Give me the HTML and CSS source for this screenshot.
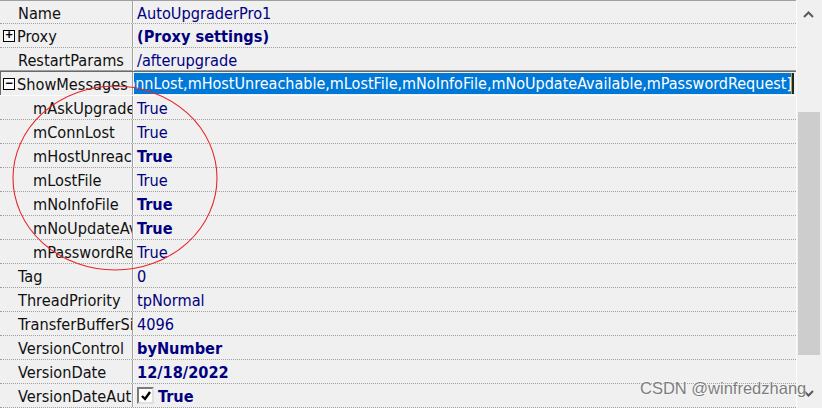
FILE: index.html
```html
<!DOCTYPE html>
<html>
<head>
<meta charset="utf-8">
<link rel="stylesheet" href="styles.css">
</head>
<body>
<div class="inspector">
  <div class="grid">
    <div class="row first"><div class="name">Name</div><div class="val">AutoUpgraderPro1</div></div>
    <div class="row"><div class="name toggle"><span class="box">+</span>Proxy</div><div class="val b">(Proxy settings)</div></div>
    <div class="row before-sel"><div class="name">RestartParams</div><div class="val">/afterupgrade</div></div>
    <div class="row sel"><div class="name toggle"><span class="box">−</span>ShowMessages</div><div class="val edit"><span class="hl">[mAskUpgrade,mConnLost,mHostUnreachable,mLostFile,mNoInfoFile,mNoUpdateAvailable,mPasswordRequest]</span><span class="caret"></span></div></div>
    <div class="row"><div class="name child">mAskUpgrade</div><div class="val">True</div></div>
    <div class="row"><div class="name child">mConnLost</div><div class="val">True</div></div>
    <div class="row"><div class="name child">mHostUnreachable</div><div class="val b">True</div></div>
    <div class="row"><div class="name child">mLostFile</div><div class="val">True</div></div>
    <div class="row"><div class="name child">mNoInfoFile</div><div class="val b">True</div></div>
    <div class="row"><div class="name child">mNoUpdateAvailable</div><div class="val b">True</div></div>
    <div class="row"><div class="name child">mPasswordRequest</div><div class="val">True</div></div>
    <div class="row"><div class="name">Tag</div><div class="val">0</div></div>
    <div class="row"><div class="name">ThreadPriority</div><div class="val">tpNormal</div></div>
    <div class="row"><div class="name">TransferBufferSize</div><div class="val">4096</div></div>
    <div class="row"><div class="name">VersionControl</div><div class="val b">byNumber</div></div>
    <div class="row"><div class="name">VersionDate</div><div class="val b">12/18/2022</div></div>
    <div class="row"><div class="name">VersionDateAutoSet</div><div class="val b"><span class="check"><svg width="12" height="12" viewBox="0 0 12 12"><path d="M2 6 L5 9 L10 2" fill="none" stroke="#000" stroke-width="2.4"/></svg></span>True</div></div>
  </div>
  <div class="scrollbar">
    <div class="arrow up"><svg width="11" height="7" viewBox="0 0 11 7"><polyline points="1,6 5.5,1.5 10,6" fill="none" stroke="#5a5a5a" stroke-width="2"/></svg></div>
    <div class="track"><div class="thumb"></div></div>
    <div class="arrow down"><svg width="11" height="7" viewBox="0 0 11 7"><polyline points="1,1 5.5,5.5 10,1" fill="none" stroke="#5a5a5a" stroke-width="2"/></svg></div>
  </div>
  <svg class="annot" width="822" height="408" viewBox="0 0 822 408"><ellipse cx="115" cy="178" rx="102" ry="92" fill="none" stroke="#e8252a" stroke-width="1.1"/></svg>
  <div class="watermark">CSDN @winfredzhang</div>
</div>
</body>
</html>
```

FILE: styles.css
```css
html, body {
  margin: 0;
  padding: 0;
  background: #f0f0f0;
}
.inspector {
  position: relative;
  width: 822px;
  height: 408px;
  display: flex;
  overflow: hidden;
  font-family: "DejaVu Sans Condensed", "DejaVu Sans", sans-serif;
  font-size: 16.2px;
}
.grid {
  width: 796px;
  display: flex;
  flex-direction: column;
}
.row {
  display: flex;
  height: 24px;
  box-sizing: border-box;
  border-bottom: 1px dotted #a0a0a0;
  flex-shrink: 0;
}
.row.first {
  border-top: 1px solid #a0a0a0;
}
.row.before-sel {
  border-bottom: 1px solid #6a6a6a;
  box-shadow: inset 0 -1px 0 #a0a0a0;
}
.row.sel {
  border-bottom: 1px solid #fcfcfc;
}
.name {
  width: 133px;
  flex-shrink: 0;
  box-sizing: border-box;
  padding-left: 18px;
  padding-top: 2px;
  border-right: 1px solid #a0a0a0;
  color: #101010;
  white-space: nowrap;
  overflow: hidden;
  display: flex;
  align-items: center;
}
.name.child {
  padding-left: 33px;
}
.name.toggle {
  padding-left: 3px;
}
.row.sel .name {
  border-left: 1px solid #6a6a6a;
  padding-left: 2px;
}
.box {
  width: 12px;
  height: 12px;
  box-sizing: border-box;
  border: 1px solid #000;
  background: #fafafa;
  font-family: "DejaVu Sans Mono", monospace;
  font-size: 12px;
  font-weight: bold;
  line-height: 9px;
  text-align: center;
  margin-right: 2px;
  margin-top: -1px;
  flex-shrink: 0;
  color: #000;
}
.val {
  flex: 1;
  min-width: 0;
  border-left: 1px solid #fbfbfb;
  padding-left: 3px;
  padding-top: 2px;
  color: #000080;
  white-space: nowrap;
  overflow: hidden;
  display: flex;
  align-items: center;
}
.val.b {
  font-weight: bold;
}
.val.edit {
  justify-content: flex-end;
  padding-left: 2px;
  padding-right: 2px;
  align-items: flex-start;
  padding-top: 1px;
}
.hl {
  background: #0078d7;
  color: #fff;
  height: 21px;
  line-height: 22px;
  font-size: 16px;
  flex-shrink: 0;
}
.caret {
  width: 2px;
  height: 21px;
  background: #1a2a2a;
  flex-shrink: 0;
  box-shadow: -1px 0 0 #c8a040;
}
.check {
  width: 17px;
  height: 17px;
  box-sizing: border-box;
  border: 2px solid;
  border-color: #7a7a7a #e0e0e0 #e0e0e0 #7a7a7a;
  background: #fff;
  display: flex;
  align-items: center;
  justify-content: center;
  margin-right: 4px;
  margin-top: -2px;
  flex-shrink: 0;
}
.scrollbar {
  width: 26px;
  box-sizing: border-box;
  border-left: 1px solid #fbfbfb;
  background: #f0f0f0;
  display: flex;
  flex-direction: column;
}
.arrow {
  display: flex;
  align-items: center;
  justify-content: center;
  padding-right: 2px;
}
.arrow.up {
  height: 28px;
}
.arrow.down {
  height: 30px;
}
.track {
  flex: 1;
  padding-left: 1px;
  padding-right: 2px;
}
.thumb {
  margin-top: 84px;
  height: 243px;
  background: #cdcdcd;
}
.annot {
  position: absolute;
  left: 0;
  top: 0;
  pointer-events: none;
}
.watermark {
  position: absolute;
  left: 640px;
  top: 379px;
  font-family: "Liberation Sans", Arial, sans-serif;
  font-size: 16.5px;
  color: #7c7c7c;
  text-shadow: 0 0 1px #fff, 0 0 2px #fff;
  white-space: nowrap;
}
```
